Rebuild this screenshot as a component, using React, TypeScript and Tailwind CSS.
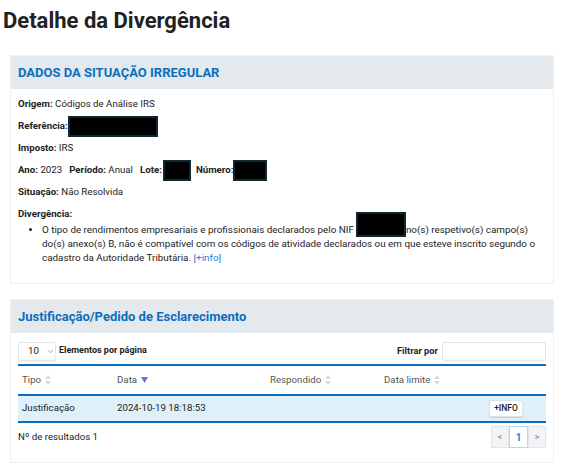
import { ChevronDown } from "lucide-react";

const FONT = { fontFamily: "Roboto, 'Liberation Sans', sans-serif" };

function Redacted({ className }: { className: string }) {
  return <span className={`inline-block bg-black border-2 border-[#0d2a33] ${className}`} />;
}

function SortIcon({ active }: { active?: boolean }) {
  if (active) {
    return (
      <svg width="7" height="6" viewBox="0 0 7 6" className="ml-1 inline-block">
        <path d="M0 0h7L3.5 6z" fill="#6a6fd8" />
      </svg>
    );
  }
  return (
    <svg width="6" height="10" viewBox="0 0 6 10" className="ml-1 inline-block">
      <path d="M0 4h6L3 0z" fill="#d5d9dd" />
      <path d="M0 6h6L3 10z" fill="#d5d9dd" />
    </svg>
  );
}

function Panel({ title, children }: { title: string; children: React.ReactNode }) {
  return (
    <div className="mx-[10px] border border-[#eef0f2] bg-white">
      <div className="bg-[#e3e9ed] h-[33px] flex items-center px-[7px]">
        <h2 className="text-[13px] font-bold text-[#0b6fc0]">{title}</h2>
      </div>
      {children}
    </div>
  );
}

export default function App() {
  return (
    <div className="w-[564px] h-[469px] bg-white text-[#222] overflow-hidden" style={FONT}>
      <h1 className="text-[22px] font-bold text-[#222] pl-[3px] pt-[7px] leading-[28px]">Detalhe da Divergência</h1>

      <div className="mt-[20px]">
        <Panel title="DADOS DA SITUAÇÃO IRREGULAR">
          <div className="px-[7px] pt-[4px] pb-[18px] text-[9.7px] text-[#222]">
            <div className="h-[22px] flex items-center">
              <b className="font-bold">Origem:</b>&nbsp;Códigos de Análise IRS
            </div>
            <div className="h-[22px] flex items-center">
              <b className="font-bold">Referência:</b>
              <Redacted className="w-[90px] h-[21px]" />
            </div>
            <div className="h-[22px] flex items-center">
              <b className="font-bold">Imposto:</b>&nbsp;IRS
            </div>
            <div className="h-[22px] flex items-center">
              <b className="font-bold">Ano:</b>&nbsp;2023
              <b className="font-bold ml-[7px]">Período:</b>&nbsp;Anual
              <b className="font-bold ml-[7px]">Lote:</b>
              <Redacted className="w-[28px] h-[21px] ml-[1px]" />
              <b className="font-bold ml-[5px]">Número:</b>
              <Redacted className="w-[34px] h-[21px]" />
            </div>
            <div className="h-[22px] flex items-center">
              <b className="font-bold">Situação:</b>&nbsp;Não Resolvida
            </div>
            <div className="mt-[4px] leading-[14px]">
              <b className="font-bold">Divergência:</b>
              <ul className="list-disc pl-[24px] mt-[2px] leading-[14px] text-[9.85px]">
                <li>
                  O tipo de rendimentos empresariais e profissionais declarados pelo NIF
                  <Redacted className="w-[50px] h-[25px] ml-[2px] -mt-[12px] align-[-4px]" />no(s) respetivo(s) campo(s)
                  do(s) anexo(s) B, não é compatível com os códigos de atividade declarados ou em que esteve inscrito segundo o
                  cadastro da Autoridade Tributária. <span className="text-[#1a7fd0]">[+info]</span>
                </li>
              </ul>
            </div>
          </div>
        </Panel>
      </div>

      <div className="mt-[15px]">
        <Panel title="Justificação/Pedido de Esclarecimento">
          <div className="px-[7px] pt-[9px] pb-[14px] text-[9.7px]">
            <div className="flex items-center justify-between h-[18px]">
              <div className="flex items-center">
                <div className="w-[38px] h-[19px] border border-[#e3e6e9] rounded-[2px] flex items-center pl-[9px] gap-[7px] text-[9.7px] shadow-[0_1px_1px_rgba(0,0,0,0.06)]">
                  10 <ChevronDown size={9} strokeWidth={1.5} className="text-[#666]" />
                </div>
                <span className="ml-[3px] font-bold text-[9px]">Elementos por página</span>
              </div>
              <div className="flex items-center">
                <span className="font-bold text-[9.3px] mr-[4px]">Filtrar por</span>
                <div className="w-[104px] h-[19px] border border-[#e3e6e9] rounded-[2px]" />
              </div>
            </div>
            <div className="mt-[4px] border-t-2 border-[#0b6fc0]" />
            <div className="flex h-[28px] items-center text-[9.7px] text-[#555]">
              <div className="w-[99px] pl-[4px] flex items-center">Tipo<SortIcon /></div>
              <div className="w-[153px] flex items-center">Data<SortIcon active /></div>
              <div className="w-[114px] flex items-center">Respondido<SortIcon /></div>
              <div className="flex items-center">Data limite<SortIcon /></div>
            </div>
            <div className="flex h-[29px] items-center bg-[#dff0f8] border-y-2 border-[#0b6fc0] text-[9.7px] text-[#222]">
              <div className="w-[99px] pl-[4px]">Justificação</div>
              <div className="flex-1">2024-10-19 18:18:53</div>
              <div className="w-[34px] h-[17px] mr-[23px] bg-white border border-[#e0e3e6] rounded-[2px] shadow-[0_1px_1px_rgba(0,0,0,0.12)] flex items-center justify-center text-[8.5px] font-medium">
                +INFO
              </div>
            </div>
            <div className="flex items-center justify-between mt-[3px]">
              <span className="text-[9.7px]">Nº de resultados 1</span>
              <div className="flex h-[22px] text-[8.5px]">
                <div className="w-[18px] bg-[#f3f4f5] border border-[#e3e6e9] flex items-center justify-center text-[#777]">&lt;</div>
                <div className="w-[19px] bg-white border border-[#b9d6ec] flex items-center justify-center text-[#1a7fd0] font-bold text-[10px]">1</div>
                <div className="w-[18px] bg-[#f3f4f5] border border-[#e3e6e9] flex items-center justify-center text-[#777]">&gt;</div>
              </div>
            </div>
          </div>
        </Panel>
      </div>
    </div>
  );
}
